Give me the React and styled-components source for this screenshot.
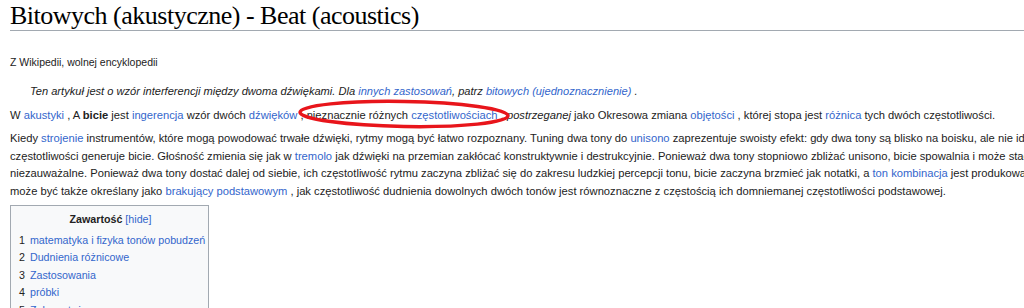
import React from "react";
import styled, { createGlobalStyle } from "styled-components";

const Global = createGlobalStyle`
  html, body { margin: 0; padding: 0; background: #fff; overflow: hidden; }
  body { font-family: "Liberation Sans", Arial, sans-serif; color: #222; }
`;

const Page = styled.div`
  position: relative;
  width: 1024px;
  height: 308px;
  overflow: hidden;
  padding: 0 10px;
  box-sizing: border-box;
`;

const Title = styled.h1`
  margin: 0;
  padding: 3px 0 1px;
  font-family: "Liberation Serif", "DejaVu Serif", serif;
  font-weight: normal;
  font-size: 26px;
  letter-spacing: -0.5px;
  line-height: 26px;
  color: #000;
  border-bottom: 1px solid #a2a9b1;
  margin-right: -10px;
`;

const Tagline = styled.div`
  margin-top: 25px;
  font-size: 10.5px;
  line-height: 13px;
  color: #222;
`;

const Hatnote = styled.div`
  margin-top: 14px;
  padding-left: 20px;
  font-style: italic;
  font-size: 11.1px;
  color: #222;
  line-height: 17.5px;
`;

const Para = styled.p`
  margin: 6px 0 0;
  font-size: 11.2px;
  line-height: 17.5px;
  white-space: nowrap;
`;

const A = styled.span`
  color: #3366cc;
  font-weight: normal;
`;

const Toc = styled.div`
  margin-top: 5px;
  width: 199px;
  background: #f8f9fa;
  border: 1px solid #a2a9b1;
  padding: 5px 6px 6px 8px;
  box-sizing: border-box;
  font-size: 10.7px;
`;

const TocTitle = styled.div`
  text-align: center;
  font-weight: bold;
  line-height: 17.5px;
  margin-bottom: 3px;
`;

const TocItem = styled.div`
  display: flex;
  gap: 5px;
  line-height: 17.5px;
  white-space: nowrap;
`;

const Num = styled.span`
  color: #222;
`;

const Ellipse = styled.svg`
  position: absolute;
  left: 298px;
  top: 98px;
  overflow: visible;
`;

export default function App() {
  return (
    <>
      <Global />
      <Page>
        <Title>Bitowych (akustyczne) - Beat (acoustics)</Title>
        <Tagline>Z Wikipedii, wolnej encyklopedii</Tagline>
        <Hatnote>
          Ten artykuł jest o wzór interferencji między dwoma dźwiękami. Dla{" "}
          <A>innych zastosowań</A>, patrz <A>bitowych (ujednoznacznienie)</A> .
        </Hatnote>
        <Para>
          W <A>akustyki</A> , A <b>bicie</b> jest <A>ingerencja</A> wzór dwóch{" "}
          <A>dźwięków</A> , nieznacznie różnych <A>częstotliwościach</A> ,{" "}
          <i>postrzeganej</i> jako Okresowa zmiana <A>objętości</A> , której
          stopa jest <A>różnica</A> tych dwóch częstotliwości.
        </Para>
        <Para>
          Kiedy <A>strojenie</A> instrumentów, które mogą powodować trwałe
          dźwięki, rytmy mogą być łatwo rozpoznany. Tuning dwa tony do{" "}
          <A>unisono</A> zaprezentuje swoisty efekt: gdy dwa tony są blisko na
          boisku, ale nie identyczne, różnica w
          <br />
          częstotliwości generuje bicie. Głośność zmienia się jak w{" "}
          <A>tremolo</A> jak dźwięki na przemian zakłócać konstruktywnie i
          destrukcyjnie. Ponieważ dwa tony stopniowo zbliżać unisono, bicie
          spowalnia i może stać się
          <br />
          niezauważalne. Ponieważ dwa tony dostać dalej od siebie, ich
          częstotliwość rytmu zaczyna zbliżać się do zakresu ludzkiej percepcji
          tonu, bicie zaczyna brzmieć jak notatki, a <A>ton kombinacja</A> jest
          produkowany. Ton kombinacja
          <br />
          może być także określany jako <A>brakujący podstawowym</A> , jak
          częstotliwość dudnienia dowolnych dwóch tonów jest równoznaczne z
          częstością ich domniemanej częstotliwości podstawowej.
        </Para>
        <Toc>
          <TocTitle>
            Zawartość <A>[hide]</A>
          </TocTitle>
          <TocItem><Num>1</Num><A>matematyka i fizyka tonów pobudzeń</A></TocItem>
          <TocItem><Num>2</Num><A>Dudnienia różnicowe</A></TocItem>
          <TocItem><Num>3</Num><A>Zastosowania</A></TocItem>
          <TocItem><Num>4</Num><A>próbki</A></TocItem>
          <TocItem><Num>5</Num><A>Zobacz też</A></TocItem>
        </Toc>
        <Ellipse width="214" height="32" viewBox="0 0 214 32">
          <ellipse cx="106" cy="16" rx="104" ry="12.5" fill="none" stroke="#e8151b" strokeWidth="3.5" transform="rotate(1 106 16)" />
        </Ellipse>
      </Page>
    </>
  );
}
